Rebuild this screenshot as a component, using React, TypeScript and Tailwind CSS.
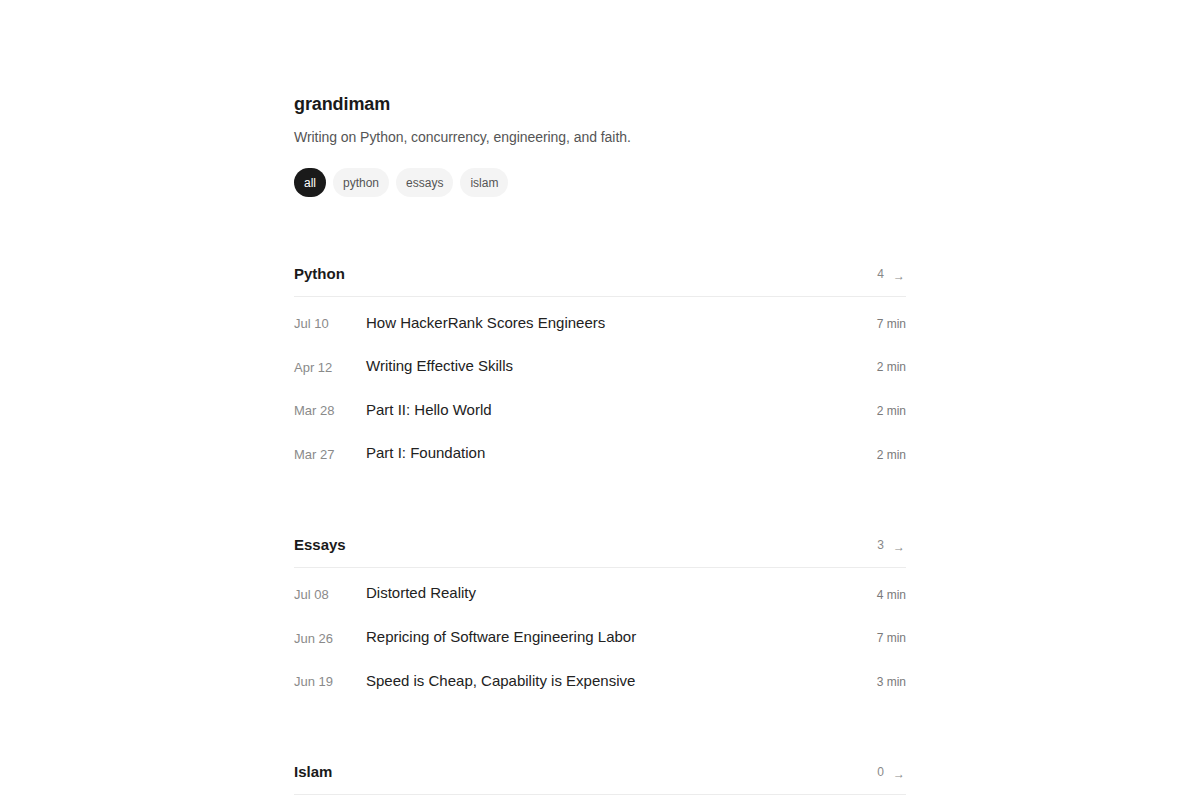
import React from 'react';

type Post = { date: string; title: string; mins: number };
type Section = { name: string; posts: Post[] };

const sections: Section[] = [
  {
    name: 'Python',
    posts: [
      { date: 'Jul 10', title: 'How HackerRank Scores Engineers', mins: 7 },
      { date: 'Apr 12', title: 'Writing Effective Skills', mins: 2 },
      { date: 'Mar 28', title: 'Part II: Hello World', mins: 2 },
      { date: 'Mar 27', title: 'Part I: Foundation', mins: 2 },
    ],
  },
  {
    name: 'Essays',
    posts: [
      { date: 'Jul 08', title: 'Distorted Reality', mins: 4 },
      { date: 'Jun 26', title: 'Repricing of Software Engineering Labor', mins: 7 },
      { date: 'Jun 19', title: 'Speed is Cheap, Capability is Expensive', mins: 3 },
    ],
  },
  { name: 'Islam', posts: [] },
];

const tags = ['all', 'python', 'essays', 'islam'];

export default function App() {
  return (
    <div className="min-h-screen bg-white font-['Liberation_Sans',Arial,sans-serif] text-[#1a1a1a]">
      <main className="w-[612px] mx-auto pt-[90px] pb-16">
        <header>
          <h1 className="text-[18px] leading-[28px] font-bold tracking-[-0.1px]">grandimam</h1>
          <p className="mt-[9px] text-[14px] leading-[20px] text-[#555] tracking-[-0.05px]">
            Writing on Python, concurrency, engineering, and faith.
          </p>
          <div className="mt-[21px] flex gap-[7px]">
            {tags.map((t, i) => (
              <button
                key={t}
                className={
                  i === 0
                    ? 'h-[29px] px-[10px] rounded-full bg-[#1a1a1a] text-white text-[12px]'
                    : 'h-[29px] px-[10px] rounded-full bg-[#f4f4f4] text-[#555] text-[12px]'
                }
              >
                {t}
              </button>
            ))}
          </div>
        </header>

        <div className="mt-[66px] flex flex-col gap-[57.5px]">
          {sections.map((s) => (
            <section key={s.name}>
              <div className="flex items-center justify-between pb-[11px] border-b border-[#ececec]">
                <h2 className="text-[15px] leading-[22px] font-bold">{s.name}</h2>
                <div className="flex items-center gap-[9px] pr-[1px] text-[#888]">
                  <span className="text-[12px]">{s.posts.length}</span>
                  <span className="text-[12px] relative top-[2px]">→</span>
                </div>
              </div>
              {s.posts.length > 0 && (
                <ul className="pt-[5px]">
                  {s.posts.map((p) => (
                    <li key={p.title} className="flex items-center h-[43.6px]">
                      <span className="w-[72px] shrink-0 text-[13px] text-[#8a8a8a]">{p.date}</span>
                      <span className="flex-1 text-[15px] text-[#222] relative -top-[1px]">{p.title}</span>
                      <span className="text-[12px] text-[#7a7a7a]">{p.mins} min</span>
                    </li>
                  ))}
                </ul>
              )}
            </section>
          ))}
        </div>
      </main>
    </div>
  );
}
